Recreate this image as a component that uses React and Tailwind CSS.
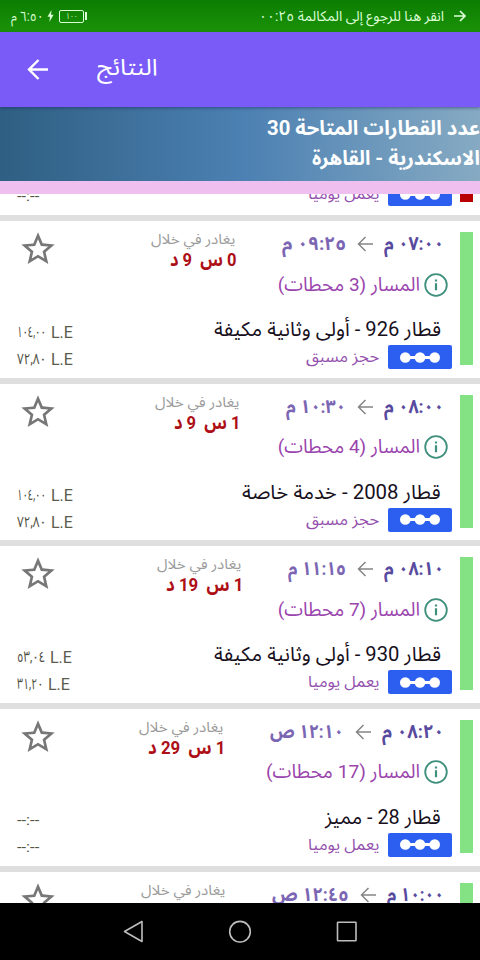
import React, { useLayoutEffect, useRef, useState } from 'react';

const trains = [
  {
    from: '٠٦:٠٠ م', fromW: 60, to: '٠٩:٢٥ م', toW: 64,
    hours: '0 س  9 د', hoursW: 67,
    route: 'المسار (3 محطات)', routeW: 142,
    name: 'قطار 28 - مميز', nameW: 116,
    note: 'يعمل يوميا', noteW: 71,
    prices: [null, null],
    bar: 'bg-[#b80000]',
  },
  {
    from: '٠٧:٠٠ م', fromW: 60, to: '٠٩:٢٥ م', toW: 64,
    hours: '0 س  9 د', hoursW: 67,
    route: 'المسار (3 محطات)', routeW: 142,
    name: 'قطار 926 - أولى وثانية مكيفة', nameW: 227,
    note: 'حجز مسبق', noteW: 73,
    prices: [{ value: '١٠٤,٠٠', w: 29 }, { value: '٧٢,٨٠', w: 29 }],
    bar: 'bg-[#84e184]',
  },
  {
    from: '٠٨:٠٠ م', fromW: 60, to: '١٠:٣٠ م', toW: 60,
    hours: '1 س  9 د', hoursW: 67,
    route: 'المسار (4 محطات)', routeW: 142,
    name: 'قطار 2008 - خدمة خاصة', nameW: 199,
    note: 'حجز مسبق', noteW: 73,
    prices: [{ value: '١٠٤,٠٠', w: 29 }, { value: '٧٢,٨٠', w: 29 }],
    bar: 'bg-[#84e184]',
  },
  {
    from: '٠٨:١٠ م', fromW: 60, to: '١١:١٥ م', toW: 58,
    hours: '1 س  19 د', hoursW: 77,
    route: 'المسار (7 محطات)', routeW: 142,
    name: 'قطار 930 - أولى وثانية مكيفة', nameW: 227,
    note: 'يعمل يوميا', noteW: 71,
    prices: [{ value: '٥٣,٠٤', w: 28 }, { value: '٣١,٢٠', w: 26 }],
    bar: 'bg-[#84e184]',
  },
  {
    from: '٠٨:٢٠ م', fromW: 62, to: '١٢:١٠ ص', toW: 74,
    hours: '1 س  29 د', hoursW: 77,
    route: 'المسار (17 محطات)', routeW: 154,
    name: 'قطار 28 - مميز', nameW: 116,
    note: 'يعمل يوميا', noteW: 71,
    prices: [null, null],
    bar: 'bg-[#84e184]',
  },
  {
    from: '١٠:٠٠ م', fromW: 57, to: '١٢:٤٥ ص', toW: 77,
    hours: '3 س  9 د', hoursW: 77,
    route: 'المسار (17 محطات)', routeW: 154,
    name: 'قطار 28 - مميز', nameW: 116,
    note: 'يعمل يوميا', noteW: 71,
    prices: [null, null],
    bar: 'bg-[#84e184]',
  },
];

// One line of text, squeezed or stretched sideways to the given width.
function Fit({ w, dir = 'rtl', className = '', children }) {
  const ref = useRef(null);
  const [scale, setScale] = useState(1);

  useLayoutEffect(() => {
    setScale(w / ref.current.offsetWidth);
  }, [w, children]);

  return (
    <span dir={dir} className={`block shrink-0 whitespace-pre ${className}`} style={{ width: w }}>
      <span
        ref={ref}
        className={`inline-block ${dir === 'rtl' ? 'origin-right' : 'origin-left'}`}
        style={{ transform: `scaleX(${scale})` }}
      >
        {children}
      </span>
    </span>
  );
}

function StatusBar() {
  return (
    <div dir="ltr" className="flex h-8 items-center bg-linear-to-b from-[#0b7d02] to-[#1b9208] pr-[14px] pl-[11px] text-[#dcffd6]">
      <Fit w={33} className="text-[14px] leading-8">٦:٥٠ م</Fit>
      <svg className="ml-[3px] h-[12px] w-[7px]" viewBox="0 0 7 12" fill="currentColor">
        <path d="M4.5 0 0.5 6.8H3L2.4 12 6.6 4.8H4Z" />
      </svg>
      <div className="ml-[5px] flex h-[13px] w-[25px] items-center justify-center rounded-[2px] border border-current">
        <Fit w={11} className="text-[9px] leading-[11px]">١٠٠</Fit>
      </div>
      <div className="ml-px h-[8px] w-[2px] bg-current" />
      <div className="flex-1" />
      <Fit w={185} className="text-[14px] leading-8">انقر هنا للرجوع إلى المكالمة ٠٠:٢٥</Fit>
      <svg className="ml-[10px] h-[12px] w-[12px]" viewBox="0 0 12 12" fill="none" stroke="currentColor" strokeWidth="1.7">
        <path d="M0 6H11M6 1l5 5-5 5" />
      </svg>
    </div>
  );
}

function Header() {
  return (
    <header dir="ltr" className="relative z-10 flex h-[75px] items-center bg-[#7b5bf8] pl-[27px] text-white shadow-[0_1px_3px_rgba(30,30,90,0.5)]">
      <svg className="h-[21px] w-[21px]" viewBox="0 0 21 21" fill="none" stroke="currentColor" strokeWidth="2.4">
        <path d="M21 10.5H2M11.5 1 2 10.5l9.5 9.5" />
      </svg>
      <Fit w={61} className="mb-[3px] ml-[49px] text-[23px] leading-[60px]">النتائج</Fit>
    </header>
  );
}

function Summary() {
  return (
    <section className="flex h-[74px] flex-col bg-linear-to-r from-[#2f5f82] via-[#4b80b2] to-[#86aac2] pt-[6px] text-[20px] leading-[30px] font-bold text-white">
      <Fit w={213}>عدد القطارات المتاحة 30</Fit>
      <Fit w={168}>الاسكندرية - القاهرة</Fit>
    </section>
  );
}

function Price({ price }) {
  if (!price) {
    return <Fit dir="ltr" w={22} className="text-[15px] leading-[27px] text-[#55553f]">--:--</Fit>;
  }
  return (
    <div dir="ltr" className="flex h-[27px] gap-[5px] leading-[27px] text-[#5c5c4c]">
      <Fit dir="ltr" w={price.w} className="text-[15px] text-[#4c4c3c]">{price.value}</Fit>
      <Fit dir="ltr" w={22} className="text-[16px]">L.E</Fit>
    </div>
  );
}

function TrainRow({ train }) {
  return (
    <article className="flex h-[162.67px] border-b-[6.67px] border-[#dfdfdf] bg-white pt-[11px] pr-[7px]">
      <div className={`h-[133px] w-[13px] shrink-0 ${train.bar}`} />

      <div className="flex-1">
        <div className="flex h-10 pr-[16px]">
          <Fit w={train.fromW} className="text-[19px] leading-6 font-bold text-[#584a9e]">{train.from}</Fit>
          <svg className="mt-[4px] mr-[11px] h-4 w-4 shrink-0" viewBox="0 0 16 16" fill="none" stroke="#858585" strokeWidth="1.5">
            <path d="M16 8H1.5M8.5 1l-7 7 7 7" />
          </svg>
          <Fit w={train.toW} className="mr-[11px] text-[19px] leading-6 font-bold text-[#7b66b3]">{train.to}</Fit>
          <div className="-mt-px mr-[45px]">
            <Fit w={84} className="mr-[2px] text-[14px] leading-4 text-[#9a9a9a]">يغادر في خلال</Fit>
            <Fit w={train.hoursW} className="mt-[2px] text-[19px] leading-[21px] font-bold text-[#ad0f17]">{train.hours}</Fit>
          </div>
          <svg className="mr-auto ml-[18px] h-10 w-10 shrink-0 -translate-y-[3px]" viewBox="0 0 24 24" fill="#777777">
            <path d="M22 9.24l-7.19-.62L12 2 9.19 8.63 2 9.24l5.46 4.73L5.82 21 12 17.27 18.18 21l-1.63-7.03L22 9.24zM12 15.4l-3.76 2.27 1-4.28-3.32-2.88 4.38-.38L12 6.1l1.71 4.04 4.38.38-3.32 2.88 1 4.28L12 15.4z" />
          </svg>
        </div>

        <div className="flex h-[25px] items-center pr-[12px]">
          <svg className="h-6 w-6" viewBox="0 0 24 24" fill="none" stroke="#3e8f7c">
            <circle cx="12" cy="12" r="10.8" strokeWidth="1.8" />
            <path d="M12 10.2v7M12 6.4v2.2" strokeWidth="2.2" />
          </svg>
          <Fit w={train.routeW} className="mr-[4px] text-[19px] leading-6 text-[#9a44ad]">{train.route}</Fit>
        </div>

        <div className="mt-[20px] flex justify-between pr-[8px] pl-[17px]">
          <div>
            <Fit w={train.nameW} className="mr-[11px] h-[28px] text-[20px] leading-[25px] text-[#17101c]">{train.name}</Fit>
            <div className="flex items-center">
              <div className="flex h-6 w-16 items-center justify-center rounded-[2px] bg-[#2c5ff0]">
                <svg className="h-[11px] w-10" viewBox="0 0 40 11" fill="white">
                  <circle cx="5.3" cy="5.5" r="5.3" />
                  <circle cx="20" cy="5.5" r="5.3" />
                  <circle cx="34.7" cy="5.5" r="5.3" />
                  <rect x="5" y="4" width="30" height="3" />
                </svg>
              </div>
              <Fit w={train.noteW} className="mr-[9px] text-[16px] leading-6 text-[#9350ad]">{train.note}</Fit>
            </div>
          </div>
          <div className="mt-[2px] flex flex-col items-end">
            <Price price={train.prices[0]} />
            <Price price={train.prices[1]} />
          </div>
        </div>
      </div>
    </article>
  );
}

function NavBar() {
  return (
    <nav dir="ltr" className="flex h-[57px] justify-center bg-black pt-[17px]">
      <svg className="h-6 w-[240px]" viewBox="0 0 240 24" fill="none" stroke="#bdbdbd" strokeWidth="1.6" strokeLinejoin="round">
        <path d="M22 1.5v20L4.5 11.5Z" />
        <circle cx="120" cy="11.7" r="10.3" />
        <rect x="217.5" y="2.3" width="18.5" height="18.5" rx="0.5" />
      </svg>
    </nav>
  );
}

function App() {
  return (
    <div dir="rtl" lang="ar" className="h-[960px] w-[480px] overflow-hidden bg-white font-[Roboto,'Noto_Sans_Arabic','DejaVu_Sans',sans-serif]">
      <StatusBar />
      <Header />
      <Summary />
      <div className="h-[13px] bg-[#efbff0]" />
      <main className="h-[709px] overflow-hidden">
        <div className="-mt-[135.67px]">
          {trains.map((train, i) => (
            <TrainRow key={i} train={train} />
          ))}
        </div>
      </main>
      <NavBar />
    </div>
  );
}

export default App;
